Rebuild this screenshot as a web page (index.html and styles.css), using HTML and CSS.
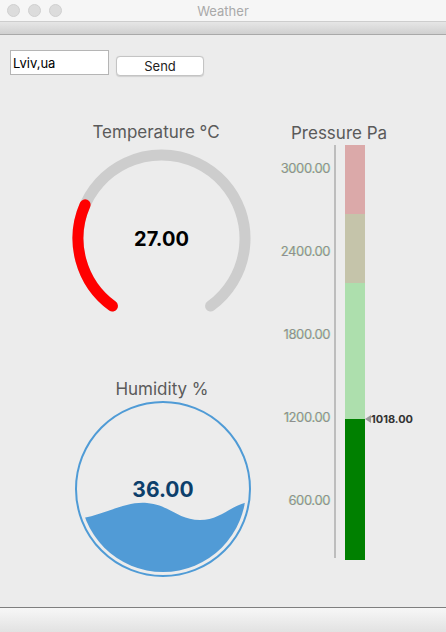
FILE: index.html
```html
<!DOCTYPE html>
<html>
<head>
<meta charset="utf-8">
<title>Weather</title>
<link rel="stylesheet" href="styles.css">
</head>
<body>
<div class="window">
  <div class="titlebar">
    <div class="lights">
      <span class="light"></span><span class="light"></span><span class="light"></span>
    </div>
    <div class="title">Weather</div>
  </div>
  <div class="toolbar"></div>
  <div class="content">
    <div class="form">
      <input class="city" type="text" value="Lviv,ua">
      <button class="send">Send</button>
    </div>
    <div class="main">
      <div class="left">
        <div class="gtitle temp-title">Temperature °C</div>
        <svg class="temp" width="184" height="172" viewBox="0 0 184 172">
          <path d="M42.42,163.05 A83.5,83.5 0 1 1 140.58,163.05" fill="none" stroke="#cdcdcd" stroke-width="11" stroke-linecap="round"/>
          <path d="M42.42,163.05 A83.5,83.5 0 0 1 15.10,61.81" fill="none" stroke="#ff0000" stroke-width="11" stroke-linecap="round"/>
          <text x="91.5" y="102.5" text-anchor="middle" class="tval">27.00</text>
        </svg>
        <div class="gtitle hum-title">Humidity %</div>
        <svg class="hum" width="184" height="182" viewBox="0 0 184 182">
          <defs>
            <clipPath id="inner"><circle cx="93" cy="90" r="83"/></clipPath>
          </defs>
          <circle cx="93" cy="90" r="87" fill="none" stroke="#4f9bd6" stroke-width="2"/>
          <path clip-path="url(#inner)" d="M8,120 C35,116 55,102 77,104 C100,106 108,121 130,121 C150,121 160,107 178,103 L178,182 L8,182 Z" fill="#519bd6"/>
          <text x="93" y="97.5" text-anchor="middle" class="hval">36.00</text>
        </svg>
      </div>
      <div class="right">
        <div class="gtitle press-title">Pressure Pa</div>
        <div class="chart">
          <div class="ticks">
            <span class="tick">3000.00</span>
            <span class="tick">2400.00</span>
            <span class="tick">1800.00</span>
            <span class="tick">1200.00</span>
            <span class="tick">600.00</span>
          </div>
          <div class="axis"></div>
          <div class="barwrap">
            <div class="bar">
              <div class="seg seg-red"></div>
              <div class="seg seg-tan"></div>
              <div class="seg seg-lgreen"></div>
              <div class="seg seg-green"></div>
            </div>
            <div class="marker">
              <svg class="pointer" width="6" height="8" viewBox="0 0 6 8"><path d="M0,4 L6,0 L6,8 Z" fill="#999"/></svg>
              <span class="mval">1018.00</span>
            </div>
          </div>
        </div>
      </div>
    </div>
  </div>
  <div class="bottombar"></div>
</div>
</body>
</html>
```

FILE: styles.css
```css
html, body {
  margin: 0;
  padding: 0;
  background: #ececec;
}

.window {
  width: 446px;
  height: 632px;
  display: flex;
  flex-direction: column;
  font-family: Inter, "Noto Sans", sans-serif;
  overflow: hidden;
}

.titlebar {
  height: 21px;
  flex: 0 0 21px;
  background: #f6f6f6;
  border-bottom: 1px solid #cdcdcd;
  display: flex;
  align-items: center;
  position: relative;
}

.lights {
  display: flex;
  gap: 8px;
  padding-left: 7px;
}

.light {
  width: 11px;
  height: 11px;
  border-radius: 50%;
  background: #dcdcdc;
  border: 0.5px solid #d0d0d0;
}

.title {
  position: absolute;
  left: 0;
  right: 0;
  top: 3px;
  text-align: center;
  font-size: 13px;
  color: #a9a9a9;
}

.toolbar {
  height: 12px;
  flex: 0 0 12px;
  background: linear-gradient(#e6e6e6, #d0d0d0);
  border-bottom: 1px solid #a9a9a9;
}

.content {
  flex: 1;
  background: #ececec;
  padding-top: 15px;
  box-sizing: border-box;
}

.form {
  display: flex;
  align-items: flex-start;
  padding-left: 10px;
  height: 25px;
}

.city {
  width: 99px;
  height: 25px;
  box-sizing: border-box;
  border: 1px solid #b5b5b5;
  background: #fff;
  font-family: Inter, "Noto Sans", sans-serif;
  font-size: 13px;
  color: #000;
  padding: 0 2px;
  margin: 0;
  outline: none;
}

.send {
  margin: 6px 0 0 7px;
  width: 88px;
  height: 20px;
  box-sizing: border-box;
  background: #fff;
  border: 1px solid #c4c4c4;
  border-radius: 4px;
  font-family: Inter, "Noto Sans", sans-serif;
  font-size: 13px;
  color: #222;
  padding: 0;
  box-shadow: 0 0.5px 1px rgba(0,0,0,0.12);
}

.main {
  display: flex;
}

.left {
  width: 184px;
  margin-left: 70px;
  display: flex;
  flex-direction: column;
  align-items: center;
  padding-top: 47px;
}

.gtitle {
  font-size: 17px;
  line-height: 20px;
  color: #5a5a5a;
  white-space: nowrap;
}

.temp-title {
  margin-right: 12px;
}

.temp {
  display: block;
  margin-top: 1px;
}

.tval {
  font-family: Inter, "Noto Sans", sans-serif;
  font-weight: 700;
  font-size: 20px;
  fill: #000;
}

.hum-title {
  margin-top: 64px;
}

.hum {
  display: block;
}

.hval {
  font-family: Inter, "Noto Sans", sans-serif;
  font-weight: 700;
  font-size: 21px;
  fill: #0c3f6b;
}

.right {
  padding-top: 48px;
  padding-left: 37px;
  display: flex;
  flex-direction: column;
}

.press-title {
  margin-bottom: 2px;
}

.chart {
  display: flex;
  margin-left: -37px;
  height: 415px;
}

.ticks {
  width: 76px;
  display: flex;
  flex-direction: column;
  align-items: flex-end;
  gap: 67px;
  padding-top: 15px;
}

.tick {
  font-size: 13px;
  line-height: 16px;
  color: #8f8f8f;
  letter-spacing: -0.4px;
  text-shadow: -0.5px 0 rgba(235, 235, 0, 0.3), 0.5px 0 rgba(0, 220, 235, 0.3);
}

.axis {
  width: 2px;
  height: 413px;
  margin-left: 4px;
  background: #bdbdbd;
}

.barwrap {
  position: relative;
  margin-left: 9px;
}

.bar {
  width: 20px;
  height: 415px;
  display: flex;
  flex-direction: column;
}

.seg-red { height: 69px; background: #dba9a9; }
.seg-tan { height: 69px; background: #c5c4aa; }
.seg-lgreen { height: 136px; background: #addfad; }
.seg-green { height: 141px; background: #008000; }

.marker {
  position: absolute;
  left: 20px;
  top: 267px;
  display: flex;
  align-items: center;
  height: 14px;
}

.pointer {
  display: block;
}

.mval {
  font-size: 11px;
  font-weight: 700;
  color: #333;
  margin-left: 0;
}

.bottombar {
  flex: 0 0 24px;
  height: 24px;
  border-top: 1px solid #7f7f7f;
  background: linear-gradient(#f7f7f7, #e2e2e2);
}
```
